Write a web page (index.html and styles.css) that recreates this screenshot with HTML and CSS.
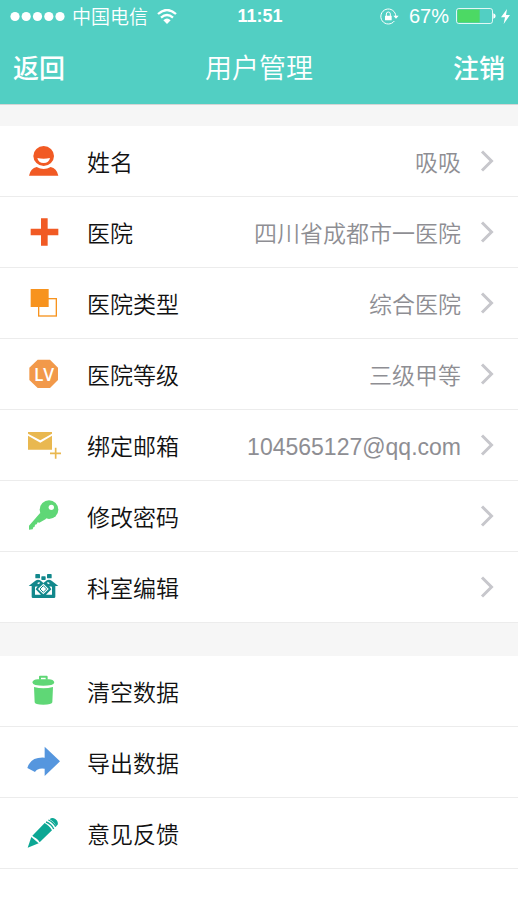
FILE: index.html
```html
<!DOCTYPE html>
<html lang="zh-CN">
<head>
<meta charset="utf-8">
<meta name="viewport" content="width=device-width, initial-scale=1">
<title>用户管理</title>
<link rel="stylesheet" href="styles.css">
</head>
<body>
<header class="top">
  <div class="status">
    <div class="status-left">
      <svg class="dots" viewBox="0 0 55 11" aria-hidden="true"><circle cx="5" cy="5.5" r="4.6"/><circle cx="16.200" cy="5.500" r="4.600"/><circle cx="27.500" cy="5.500" r="4.600"/><circle cx="38.800" cy="5.500" r="4.600"/><circle cx="50" cy="5.500" r="4.600"/></svg>
      <span class="carrier">中国电信</span>
      <svg class="wifi" viewBox="0 0 60 45" aria-hidden="true"><path d="M3 15Q30-9 57 15M12 26Q30 10 48 26" fill="none" stroke="#fff" stroke-width="7"/><path d="M19 34Q30 23 41 34L30 45Z" fill="#fff"/></svg>
    </div>
    <time class="clock">11:51</time>
    <div class="status-right">
      <svg class="lock" viewBox="0 0 57 51" aria-hidden="true"><path d="M43 39A22.500 22.500 0 1 1 47.500 25" fill="none" stroke="#fff" stroke-width="3"/><path d="M40 23H56L48 32Z" fill="#fff"/><rect x="15" y="23" width="20" height="14" rx="1" fill="#fff"/><path d="M19 24V18a6 6 0 0 1 12 0V24" fill="none" stroke="#fff" stroke-width="3"/></svg>
      <span class="percent">67%</span>
      <svg class="battery" viewBox="0 0 120 48" aria-hidden="true"><rect x="1.500" y="1.500" width="108" height="45" rx="7" fill="none" stroke="#fff" stroke-width="2.500"/><path d="M8 4.500H71V43.500H8Q4.500 43.500 4.500 40V8Q4.500 4.500 8 4.500Z" fill="#4cd964"/><path d="M112 16Q119 18 119 24T112 32Z" fill="#fff"/></svg>
      <svg class="bolt" viewBox="0 0 27 45" aria-hidden="true"><path d="M18 0L0 25H12L8 45L27 18H15Z" fill="#fff"/></svg>
    </div>
  </div>
  <nav class="bar">
    <a class="bar-link" href="#back">返回</a>
    <h1 class="title">用户管理</h1>
    <a class="bar-link end" href="#logout">注销</a>
  </nav>
</header>
<main>
  <section class="group">
    <a class="row" href="#name">
      <svg class="icon" viewBox="0 0 108 108" aria-hidden="true"><ellipse cx="53" cy="39" rx="31" ry="30" fill="#f15a24"/><path d="M34 45Q53 49 72 45Q69 60 53 60T34 45Z" fill="#fff"/><path d="M9 98Q14 75 32 72Q53 84 74 72Q92 75 97 98Z" fill="#f15a24"/></svg>
      <span class="text"><span class="label">姓名</span><span class="value">吸吸</span></span>
      <svg class="chevron" viewBox="0 0 14 22" aria-hidden="true"><path d="M2 1.500L11.500 11L2 20.500"/></svg>
    </a>
    <a class="row" href="#hospital">
      <svg class="icon" viewBox="0 0 108 108" aria-hidden="true"><path d="M45 13H65V44H97V64H65V95H45V64H14V44H45Z" fill="#f15a24"/></svg>
      <span class="text"><span class="label">医院</span><span class="value">四川省成都市一医院</span></span>
      <svg class="chevron" viewBox="0 0 14 22" aria-hidden="true"><path d="M2 1.500L11.500 11L2 20.500"/></svg>
    </a>
    <a class="row" href="#type">
      <svg class="icon" viewBox="0 0 108 108" aria-hidden="true"><rect x="38" y="41" width="53" height="52" fill="#fff" stroke="#f7931e" stroke-width="4"/><rect x="14" y="12" width="54" height="54" fill="#f7931e"/></svg>
      <span class="text"><span class="label">医院类型</span><span class="value">综合医院</span></span>
      <svg class="chevron" viewBox="0 0 14 22" aria-hidden="true"><path d="M2 1.500L11.500 11L2 20.500"/></svg>
    </a>
    <a class="row" href="#level">
      <svg class="icon" viewBox="0 0 108 108" aria-hidden="true"><path d="M35 11H72L96 35V72L72 96H35L10 72V35Z" fill="#f2994a"/><text class="lv" x="54" y="74" text-anchor="middle">LV</text></svg>
      <span class="text"><span class="label">医院等级</span><span class="value">三级甲等</span></span>
      <svg class="chevron" viewBox="0 0 14 22" aria-hidden="true"><path d="M2 1.500L11.500 11L2 20.500"/></svg>
    </a>
    <a class="row" href="#email">
      <svg class="icon" viewBox="0 0 108 108" aria-hidden="true"><path d="M6 15H78V20L43 40L6 20ZM6 26L43 47L78 26V68H6Z" fill="#e9b850"/><path d="M89 62V95M72 79H105" stroke="#e9b850" stroke-width="5"/></svg>
      <span class="text"><span class="label">绑定邮箱</span><span class="value">104565127@qq.com</span></span>
      <svg class="chevron" viewBox="0 0 14 22" aria-hidden="true"><path d="M2 1.500L11.500 11L2 20.500"/></svg>
    </a>
    <a class="row" href="#password">
      <svg class="icon" viewBox="0 0 108 108" aria-hidden="true"><circle cx="69" cy="35" r="28" fill="#5fd776"/><path d="M43 44L61 62L40 74L35 73L32 79L27 80L26 86L22 88L20 94L9 95V83Z" fill="#5fd776"/><circle cx="76" cy="28" r="8" fill="#fff"/></svg>
      <span class="text"><span class="label">修改密码</span></span>
      <svg class="chevron" viewBox="0 0 14 22" aria-hidden="true"><path d="M2 1.500L11.500 11L2 20.500"/></svg>
    </a>
    <a class="row" href="#departments">
      <svg class="icon" viewBox="0 0 108 108" aria-hidden="true"><g fill="#12888c"><rect x="28" y="15" width="14" height="13" rx="2"/><rect x="46" y="22" width="13" height="11" rx="2"/><rect x="63" y="15" width="14" height="13" rx="2"/><path d="M8 51L28 35Q39 29 48 38L52 42L57 38Q66 29 77 35L97 51H88V83Q88 87 84 87H21Q17 87 17 83V51Z"/></g><path d="M27 53V77H45L29 61L35 52ZM78 53V77H60L76 61L70 52Z" fill="#fff"/><path d="M52 44L68 60L52 76L36 60Z" fill="#fff"/><path d="M52 50L62 60L52 70L42 60Z" fill="#fff" stroke="#12888c" stroke-width="3"/><path d="M35 44L41 41M70 44L64 41" stroke="#fff" stroke-width="4"/></svg>
      <span class="text"><span class="label">科室编辑</span></span>
      <svg class="chevron" viewBox="0 0 14 22" aria-hidden="true"><path d="M2 1.500L11.500 11L2 20.500"/></svg>
    </a>
  </section>
  <section class="group">
    <a class="row" href="#clear">
      <svg class="icon" viewBox="0 0 108 108" aria-hidden="true"><g fill="#5fd776"><path d="M39 20V11Q39 8 42 8H62Q65 8 65 11V20H59V14H45V20Z"/><path d="M19 28Q22 19 35 19H69Q82 19 85 28Q84 34 76 36Q52 40 28 36Q20 34 19 28Z"/><path d="M24 42Q52 50 81 42L79 88Q78 95 52 95T26 88Z"/></g></svg>
      <span class="text"><span class="label">清空数据</span></span>
    </a>
    <a class="row" href="#export">
      <svg class="icon" viewBox="0 0 108 108" aria-hidden="true"><path d="M56 8L102 52L56 96V74Q34 71 27 84L4 72Q14 38 56 41Z" fill="#5596de"/></svg>
      <span class="text"><span class="label">导出数据</span></span>
    </a>
    <a class="row" href="#feedback">
      <svg class="icon" viewBox="0 0 108 108" aria-hidden="true"><g fill="#0ca794"><path d="M5 98L16 66L38 85Z"/><path d="M19 62L56 24Q63 29 68 33T78 46L41 82Q37 75 30 70T19 62Z"/><path d="M71 13Q78 6 88 12Q98 20 95 29L90 34Q89 27 82 21T71 13Z"/></g><path d="M60 21Q67 23 74 29T83 42M67 15Q75 18 81 24T89 35" fill="none" stroke="#0ca794" stroke-width="4"/></svg>
      <span class="text"><span class="label">意见反馈</span></span>
    </a>
  </section>
</main>
</body>
</html>
```
FILE: styles.css
```css
* {
  box-sizing: border-box;
}

body {
  margin: 0;
  background: #fff;
  color: #111;
  font-family: "Liberation Sans", "Noto Sans CJK SC", sans-serif;
}

a {
  color: inherit;
  text-decoration: none;
}

svg {
  display: block;
  flex: none;
}

.top {
  background: #52cfc3;
  color: #fff;
  border-bottom: 1px solid #d5d5d5;
}

.status {
  display: grid;
  grid-template-columns: 1fr auto 1fr;
  align-items: center;
  height: 32px;
  padding: 0 8px 0 10px;
  font-size: 19px;
  line-height: 32px;
}

.status-left,
.status-right {
  display: flex;
  align-items: center;
}

.status-right {
  justify-content: flex-end;
}

.dots {
  width: 55px;
  height: 11px;
  fill: #fff;
}

.carrier {
  margin: 0 9px 0 7px;
  font-family: "Noto Sans CJK SC", sans-serif;
  font-weight: 350;
}

.wifi {
  width: 20px;
  height: 15px;
}

.clock {
  font-size: 18px;
  font-weight: 700;
}

.lock {
  width: 19px;
  height: 17px;
}

.percent {
  margin: 0 7px 0 10px;
  font-size: 20px;
}

.battery {
  width: 40px;
  height: 16px;
}

.bolt {
  width: 9px;
  height: 15px;
  margin-left: 5px;
}

.bar {
  display: grid;
  grid-template-columns: 1fr auto 1fr;
  align-items: center;
  height: 72px;
  padding: 0 13px 4px;
}

.bar-link {
  font-size: 26px;
  font-weight: 500;
}

.end {
  text-align: right;
}

.title {
  margin: 0;
  font-size: 27px;
  font-weight: 350;
}

.group {
  border-top: 20px solid #f6f6f6;
}

.group + .group {
  border-top-width: 34px;
}

.row {
  display: flex;
  align-items: center;
  height: 71px;
  padding: 0 24px 0 26px;
  border-bottom: 1px solid #ececec;
  font-size: 23px;
}

.icon {
  width: 36px;
  height: 36px;
  margin-right: 25px;
}

.lv {
  fill: #fff;
  font-family: "Open Sans", sans-serif;
  font-size: 52px;
  font-weight: 600;
}

.text {
  display: flex;
  flex: 1;
  align-items: baseline;
  justify-content: space-between;
  font-weight: 350;
}

.value {
  color: #8e8e93;
}

.chevron {
  width: 14px;
  height: 22px;
  margin-left: 19px;
  fill: none;
  stroke: #c7c7cc;
  stroke-width: 3;
}

.group:first-child {
  border-top-width: 21px;
}

.group:last-child {
  border-top-width: 33px;
}
```
